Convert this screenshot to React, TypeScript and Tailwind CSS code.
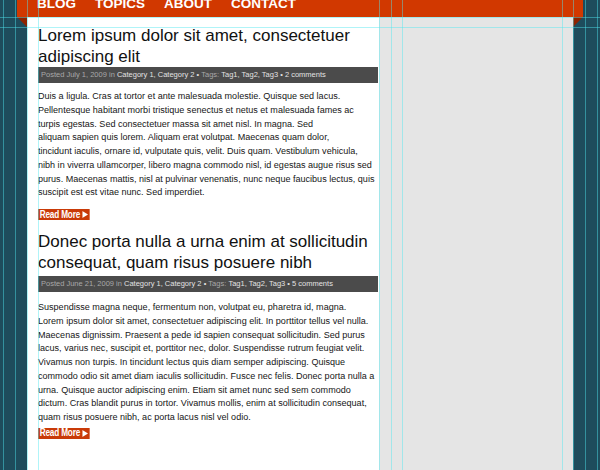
const ORANGE = "bg-[#d13800]";

const GUIDES_X = [3, 15, 27, 38, 379, 391, 402, 562, 573, 585, 597];
const GUIDES_Y = [17, 27];

interface Post {
  title: string;
  date: string;
  comments: string;
  lines: string[];
  barGap: string;
  bodyGap: string;
  moreGap: string;
}

// lines are broken by hand, as in the mockup
const posts: Post[] = [
  {
    title: "Lorem ipsum dolor sit amet, consectetuer adipiscing elit",
    date: "July 1, 2009",
    comments: "2 comments",
    barGap: "mt-0",
    bodyGap: "mt-[7px]",
    moreGap: "mt-[9px]",
    lines: [
      "Duis a ligula. Cras at tortor et ante malesuada molestie. Quisque sed lacus.",
      "Pellentesque habitant morbi tristique senectus et netus et malesuada fames ac",
      "turpis egestas. Sed consectetuer massa sit amet nisl. In magna. Sed",
      "aliquam sapien quis lorem. Aliquam erat volutpat. Maecenas quam dolor,",
      "tincidunt iaculis, ornare id, vulputate quis, velit. Duis quam. Vestibulum vehicula,",
      "nibh in viverra ullamcorper, libero magna commodo nisl, id egestas augue risus sed",
      "purus. Maecenas mattis, nisl at pulvinar venenatis, nunc neque faucibus lectus, quis",
      "suscipit est est vitae nunc. Sed imperdiet.",
    ],
  },
  {
    title: "Donec porta nulla a urna enim at sollicitudin consequat, quam risus posuere nibh",
    date: "June 21, 2009",
    comments: "5 comments",
    barGap: "mt-[3px]",
    bodyGap: "mt-[9px]",
    moreGap: "mt-[3px]",
    lines: [
      "Suspendisse magna neque, fermentum non, volutpat eu, pharetra id, magna.",
      "Lorem ipsum dolor sit amet, consectetuer adipiscing elit. In porttitor tellus vel nulla.",
      "Maecenas dignissim. Praesent a pede id sapien consequat sollicitudin. Sed purus",
      "lacus, varius nec, suscipit et, porttitor nec, dolor. Suspendisse rutrum feugiat velit.",
      "Vivamus non turpis. In tincidunt lectus quis diam semper adipiscing. Quisque",
      "commodo odio sit amet diam iaculis sollicitudin. Fusce nec felis. Donec porta nulla a",
      "urna. Quisque auctor adipiscing enim. Etiam sit amet nunc sed sem commodo",
      "dictum. Cras blandit purus in tortor. Vivamus mollis, enim at sollicitudin consequat,",
      "quam risus posuere nibh, ac porta lacus nisl vel odio.",
    ],
  },
];

function PostBlock({ post }: { post: Post }) {
  return (
    <div className="flex flex-col">
      <h2 className="text-[17px] leading-[21px] text-[#111] pr-[6px]">{post.title}</h2>
      <div
        className={`${post.barGap} h-[16px] bg-[#4b4b4b] flex items-center pl-[3px] text-[7.5px] text-[#a8a8a8] whitespace-nowrap`}
      >
        Posted {post.date} in&nbsp;
        <span className="text-[#e2e2e2]">Category 1, Category 2</span>
        &nbsp;<span className="text-[#e2e2e2]">•</span>&nbsp;Tags:&nbsp;
        <span className="text-[#e2e2e2]">Tag1, Tag2, Tag3 • {post.comments}</span>
      </div>
      <div className={`${post.bodyGap} flex flex-col text-[9.05px] leading-[13.75px] text-[#161616] whitespace-nowrap`}>
        {post.lines.map((l, i) => (
          <span key={i}>{l}</span>
        ))}
      </div>
      <div className={`${post.moreGap} flex h-[11px]`}>
        <span className="flex origin-top-left scale-x-[0.82] items-center gap-[3px] h-[11px] px-[2px] bg-[#c93a08] text-white text-[10px] font-bold leading-none tracking-[-0.2px]">
          Read More
          <svg width="7" height="7" viewBox="0 0 7 7">
            <polygon points="0,0 7,3.5 0,7" fill="white" />
          </svg>
        </span>
      </div>
    </div>
  );
}

export default function App() {
  return (
    <div className="relative w-[600px] h-[470px] overflow-hidden bg-[#1e4c5c] flex flex-col [font-family:'Liberation_Sans',Arial,sans-serif]">
      {/* nav ribbon */}
      <div className="flex h-[17px] shrink-0">
        <div className="w-[17px]" />
        <div className={`flex-1 ${ORANGE} overflow-hidden`}>
          <nav className="flex gap-[19px] pl-[20px] mt-[-4px] text-white font-bold text-[13.5px] leading-[15px]">
            <span>BLOG</span>
            <span>TOPICS</span>
            <span>ABOUT</span>
            <span>CONTACT</span>
          </nav>
        </div>
        <div className="w-[17px]" />
      </div>

      <div className="flex flex-1 min-h-0">
        <div className="w-[27px] relative">
          <svg className="absolute left-[17px] top-0" width="10" height="10" viewBox="0 0 10 10">
            <polygon points="0,0 10,0 10,10" fill="#8e2300" />
          </svg>
        </div>
        <main className="w-[352px] bg-white pl-[11px] pr-[1px] pt-[8px] flex flex-col gap-[11px] overflow-hidden">
          {posts.map((p) => (
            <PostBlock key={p.date} post={p} />
          ))}
        </main>
        <aside className="w-[194px] bg-[#e5e5e5]" />
        <div className="w-[27px] relative">
          <svg className="absolute left-0 top-0" width="10" height="10" viewBox="0 0 10 10">
            <polygon points="0,0 10,0 0,10" fill="#8e2300" />
          </svg>
        </div>
      </div>

      {/* photoshop guides */}
      <div className="pointer-events-none absolute inset-0">
        {GUIDES_X.map((x) => (
          <div key={x} className="absolute top-0 bottom-0 w-px bg-[rgba(80,230,240,0.45)]" style={{ left: x }} />
        ))}
        {GUIDES_Y.map((y) => (
          <div key={y} className="absolute left-0 right-0 h-px bg-[rgba(80,230,240,0.45)]" style={{ top: y }} />
        ))}
      </div>
    </div>
  );
}
